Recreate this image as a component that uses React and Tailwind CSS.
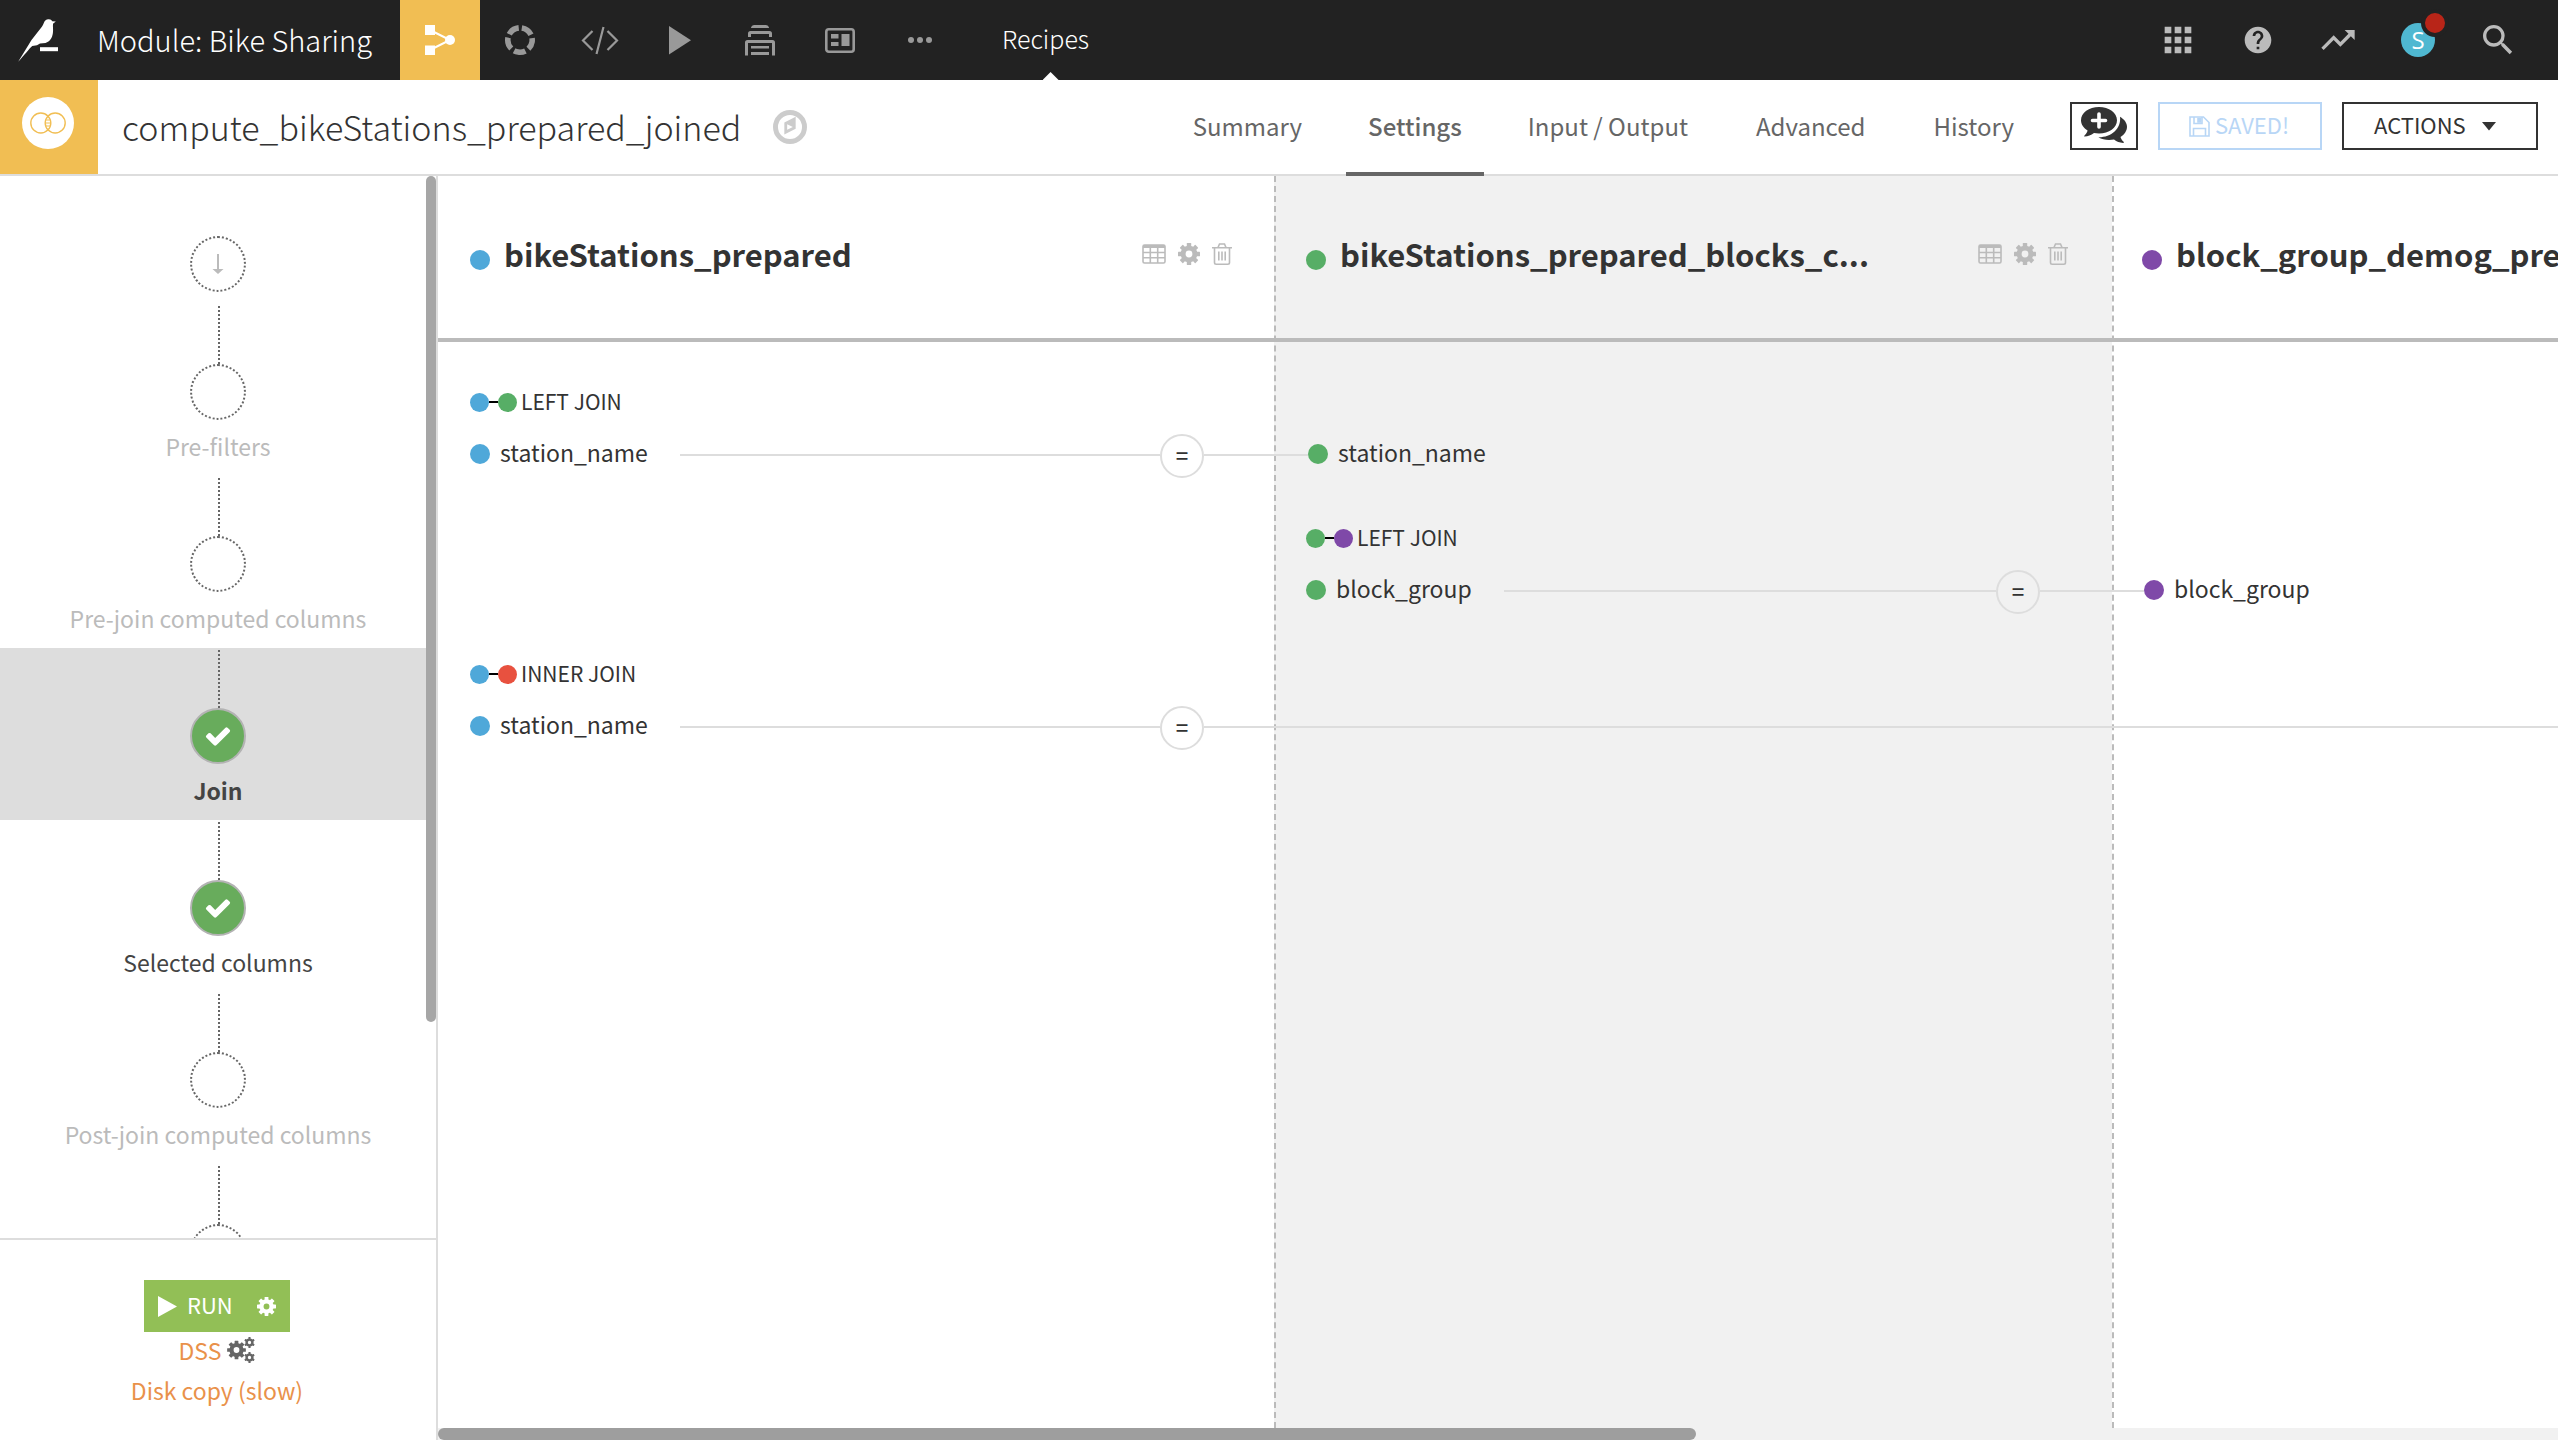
import { MdApps, MdHelp, MdSearch, MdTrendingUp } from "react-icons/md";

const steps = [
  { id: "pre-filters", label: "Pre-filters", state: "empty" },
  { id: "pre-join", label: "Pre-join computed columns", state: "empty" },
  { id: "join", label: "Join", state: "active" },
  { id: "columns", label: "Selected columns", state: "done" },
  { id: "post-join", label: "Post-join computed columns", state: "empty" },
  { id: "next", label: "", state: "empty" },
];

const tabs = ["Summary", "Settings", "Input / Output", "Advanced", "History"];

const datasets = [
  { name: "bikeStations_prepared", dot: "bg-[#4fa8d9]" },
  { name: "bikeStations_prepared_blocks_c...", dot: "bg-[#57ae66]" },
  { name: "block_group_demog_prepared", dot: "bg-[#7f49a8]" },
];

const joins = [
  {
    type: "LEFT JOIN",
    offset: "pl-8",
    left: { name: "station_name", dot: "bg-[#4fa8d9]" },
    right: { name: "station_name", dot: "bg-[#57ae66]" },
    otherDot: "bg-[#57ae66]",
  },
  {
    type: "LEFT JOIN",
    offset: "pl-[868px]",
    left: { name: "block_group", dot: "bg-[#57ae66]" },
    right: { name: "block_group", dot: "bg-[#7f49a8]" },
    otherDot: "bg-[#7f49a8]",
  },
  {
    type: "INNER JOIN",
    offset: "pl-8",
    left: { name: "station_name", dot: "bg-[#4fa8d9]" },
    right: null,
    otherDot: "bg-[#e8513f]",
  },
];

function GearShape({ teeth = 8 }) {
  const angles = Array.from({ length: teeth }, (_, i) => (i * 360) / teeth);
  return (
    <>
      <circle r="6.4" fill="none" stroke="currentColor" strokeWidth="5.4" />
      {angles.map((a) => (
        <rect key={a} x="-2.4" y="-12" width="4.8" height="4.5" rx="0.6" fill="currentColor" transform={`rotate(${a})`} />
      ))}
    </>
  );
}

function Gear({ className }) {
  return (
    <svg viewBox="-12 -12 24 24" className={className}>
      <GearShape />
    </svg>
  );
}

function Gears({ className }) {
  return (
    <svg viewBox="0 0 28 26" className={className}>
      <g transform="translate(9.5 13) scale(0.78)"><GearShape /></g>
      <g transform="translate(22.5 5.5) scale(0.45)"><GearShape teeth={6} /></g>
      <g transform="translate(22.5 20.5) scale(0.45)"><GearShape teeth={6} /></g>
    </svg>
  );
}

function Check() {
  return (
    <svg viewBox="0 0 1792 1792" className="size-7 fill-white">
      <path d="M1671 566q0 40-28 68l-724 724-136 136q-28 28-68 28t-68-28l-136-136-362-362q-28-28-28-68t28-68l136-136q28-28 68-28t68 28l294 295 656-657q28-28 68-28t68 28l136 136q28 28 28 68z" />
    </svg>
  );
}

function Logo() {
  return (
    <svg viewBox="0 0 44 44" className="size-11 fill-white">
      <path d="M2.2 44.8 L15.5 23 L25.5 10.2 C28.3 7 27.5 2.6 32.4 2.2 C34.3 2 35.6 2.9 36.2 4.2 L39.8 4.6 L37 6.8 C36.7 10 37.4 12.5 36.9 16 C36.2 21 34 24.5 29.5 26 L24 26.4 L21 28.2 L16.2 29 C13 32 8 38.5 2.2 44.8 Z" transform="translate(0 -1)" />
      <rect x="24" y="29.2" width="18" height="4" />
    </svg>
  );
}

function NavIcon({ label, children, active }) {
  return (
    <button
      aria-label={label}
      className={
        active
          ? "flex w-20 items-center justify-center bg-[#f1be53] text-white"
          : "flex w-20 items-center justify-center text-[#999]"
      }
    >
      {children}
    </button>
  );
}

function TopBar() {
  return (
    <header className="flex h-20 shrink-0 bg-[#222] text-white">
      <a href="#home" aria-label="Home" className="flex w-[97px] items-center pl-4">
        <Logo />
      </a>
      <a href="#project" className="flex w-[303px] items-center text-[29px] font-light whitespace-nowrap">
        Module: Bike Sharing
      </a>
      <nav className="flex">
        <NavIcon label="Flow" active>
          <svg viewBox="0 0 32 32" className="size-8">
            <path d="M6 6 L26 16 L6 26" fill="none" stroke="currentColor" strokeWidth="2" />
            <rect x="1" y="1" width="10" height="10" fill="currentColor" />
            <rect x="1" y="21.5" width="10" height="9.5" fill="currentColor" />
            <circle cx="26" cy="16" r="5" fill="currentColor" />
          </svg>
        </NavIcon>
        <NavIcon label="Lab">
          <svg viewBox="0 0 32 32" className="size-8">
            <circle cx="16" cy="16" r="12.2" fill="none" stroke="currentColor" strokeWidth="5.6" strokeDasharray="11.73 3.6" transform="rotate(-81.5 16 16)" />
          </svg>
        </NavIcon>
        <NavIcon label="Code">
          <svg viewBox="0 0 40 32" className="h-8 w-10" fill="none" stroke="currentColor" strokeWidth="2.2">
            <path d="M12.5 7 L3 16.5 L12.5 26 M27.5 7 L37 16.5 L27.5 26 M23.5 3 L16.5 30" />
          </svg>
        </NavIcon>
        <NavIcon label="Jobs">
          <svg viewBox="0 0 32 32" className="size-8 fill-current">
            <path d="M5 2 L27 16.2 L5 30.5 Z" />
          </svg>
        </NavIcon>
        <NavIcon label="Automation">
          <svg viewBox="0 0 32 32" className="size-8 fill-current">
            <path d="M7 4 V3.5 Q7.5 1 10 1 H22 Q24.5 1 25 3.5 V4 Z" />
            <path d="M4 13 V9.5 Q4 7 6.5 7 H25.5 Q28 7 28 9.5 V13 H25 V10 H7 V13 Z" />
            <path d="M1 31.5 V18.5 Q1 16 3.5 16 H28.5 Q31 16 31 18.5 V31.5 H28 V19 H4 V31.5 Z" />
            <rect x="7" y="22" width="18" height="2.5" />
            <rect x="7" y="28" width="18" height="3" />
          </svg>
        </NavIcon>
        <NavIcon label="Dashboards">
          <svg viewBox="0 0 32 32" className="size-8 fill-current">
            <rect x="2.3" y="5.3" width="27.4" height="22.4" rx="2.5" fill="none" stroke="currentColor" strokeWidth="2.6" />
            <rect x="7" y="10" width="7.5" height="4.5" />
            <rect x="7" y="18" width="7.5" height="4" />
            <rect x="17.5" y="10" width="8" height="12" />
          </svg>
        </NavIcon>
        <NavIcon label="More">
          <svg viewBox="0 0 32 32" className="size-8 fill-current">
            <circle cx="7" cy="16" r="3" />
            <circle cx="16" cy="16" r="3" />
            <circle cx="25" cy="16" r="3" />
          </svg>
        </NavIcon>
        <a href="#recipes" className="relative flex items-center pr-[52px] pb-0.5 pl-[42px] text-[25px] font-light">
          Recipes
          <span className="absolute bottom-0 left-1/2 h-2 w-4 -translate-x-1/2 bg-white [clip-path:polygon(50%_0,100%_100%,0_100%)]" />
        </a>
      </nav>
      <div className="ml-auto flex pr-5 text-[#bbb]">
        <button aria-label="Applications" className="flex w-20 items-center justify-center">
          <MdApps className="size-10" />
        </button>
        <button aria-label="Help" className="flex w-20 items-center justify-center">
          <MdHelp className="size-8" />
        </button>
        <button aria-label="Activity" className="flex w-20 items-center justify-center">
          <MdTrendingUp className="size-10" />
        </button>
        <button aria-label="Profile" className="flex w-20 items-center justify-center">
          <span className="relative flex size-[34px] items-center justify-center rounded-full bg-[#4fb8d1] font-['Open_Sans',sans-serif] text-[24px] leading-[34px] text-white">
            S
            <span className="absolute -top-3.5 -right-3.5 size-7 rounded-full border-4 border-[#222] bg-[#b82518]" />
          </span>
        </button>
        <button aria-label="Search" className="flex w-20 items-center justify-center">
          <MdSearch className="size-10" />
        </button>
      </div>
    </header>
  );
}

function RecipeHeader() {
  return (
    <div className="flex h-24 shrink-0 border-b-2 border-[#ddd] text-[#333]">
      <div className="flex w-[98px] items-center bg-[#f1be53] pb-2 pl-[22px]">
        <svg viewBox="0 0 52 52" className="size-[52px]">
          <circle cx="26" cy="26" r="26" fill="#fff" />
          <g fill="none" stroke="#f1be53" strokeWidth="1.4">
            <circle cx="18.8" cy="26" r="10" />
            <circle cx="33.2" cy="26" r="10" />
            <path d="M24 23 H28 M23.5 26 H28.5 M24 29 H28" strokeWidth="1" />
          </g>
        </svg>
      </div>
      <h1 className="flex items-center pl-6 text-[34px] leading-10 font-light">compute_bikeStations_prepared_joined</h1>
      <button aria-label="Navigate" className="ml-8 text-[#ccc]">
        <svg viewBox="0 0 1536 1536" className="size-[34px]">
          <circle cx="768" cy="768" r="656" fill="none" stroke="currentColor" strokeWidth="224" />
          <path d="M1024 305v542l-512 256v-542zM640 895l256-128-256-128z" fill="currentColor" fillRule="evenodd" />
        </svg>
      </button>

      <nav className="ml-auto flex h-24 gap-5">
        {tabs.map((tab) => (
          <a
            key={tab}
            href={"#" + tab}
            className={
              tab === "Settings"
                ? "flex items-center border-b-4 border-[#666] px-[22px] text-[24px] font-medium text-[#666]"
                : "flex items-center border-b-4 border-transparent px-6 text-[24px] text-[#666]"
            }
          >
            {tab}
          </a>
        ))}
      </nav>

      <div className="ml-8 flex h-[92px] items-center gap-5 pr-5 text-[22px]">
        <button aria-label="Discussions" className="flex h-12 w-[68px] justify-center border-2 border-[#333] pt-[3px]">
          <svg viewBox="0 0 46 37" className="h-[37px] w-[46px] fill-[#333]">
            <path d="M18 0 C28 0 36 5.9 36 13.3 C36 20.7 28 26.5 18 26.5 C16.2 26.5 14.5 26.3 13 26 C10 28.2 7 29.3 3.6 29.5 C3 29.5 3 28.9 3.5 28.4 C5.2 26.8 6.2 25.4 6.6 23.6 C2.6 21.2 0 17.5 0 13.3 C0 5.9 8 0 18 0 Z" />
            <path d="M39 9.8 C43.5 12.5 46 16 46 19.8 C46 23.9 43.5 27.5 39.5 30 C40 32 41 33.2 42.6 34.8 C43.1 35.3 42.9 36.1 42.2 36 C38.5 35.6 35.8 34.6 33 32.5 C27.5 33.5 21.5 32.8 17.4 30.3 C30 30.5 40.5 22 39 9.8 Z" />
            <path d="M18 7 V20 M11.5 13.5 H24.5" stroke="#fff" strokeWidth="3.6" strokeLinecap="round" />
          </svg>
        </button>
        <button className="flex h-12 w-[164px] items-center gap-[5px] border-2 border-[#b8d6f6] pl-[29px] text-[#b8d6f6]">
          <svg viewBox="0 0 21 21" className="size-[21px]" fill="none" stroke="currentColor" strokeWidth="1.6">
            <path d="M1 1 H14.5 L20 6.5 V20 H1 Z M5 1 V7.5 H13 V1 M4.5 20 V12.5 H16.5 V20" />
            <rect x="9" y="2.5" width="2.5" height="3.5" fill="currentColor" />
          </svg>
          <span className="pb-[3px]">SAVED!</span>
        </button>
        <button className="flex h-12 w-[196px] items-center gap-4 border-2 border-[#333] pl-[30px]">
          <span className="pb-[3px]">ACTIONS</span>
          <svg viewBox="0 0 14 9" className="h-[9px] w-3.5 fill-[#333]">
            <path d="M0 0 H14 L7 8.5 Z" />
          </svg>
        </button>
      </div>
    </div>
  );
}

function Step({ step }) {
  const { label, state } = step;
  const complete = state !== "empty";
  return (
    <li className={state === "active" ? "flex h-[172px] shrink-0 flex-col items-center bg-[#ddd] pt-0.5" : "flex h-[172px] shrink-0 flex-col items-center pt-0.5"}>
      <div className="h-[58px] w-1 border-r-2 border-dotted border-[#666]" />
      <div
        className={
          complete
            ? "flex size-14 items-center justify-center rounded-full border-2 border-[#b3b3b3] bg-[#68ac5c]"
            : "size-14 rounded-full border-2 border-dotted border-[#666]"
        }
      >
        {complete && <Check />}
      </div>
      {label && (
        <a
          href={"#" + step.id}
          className={
            state === "active"
              ? "mt-3 text-[23px] leading-7 font-bold text-[#444]"
              : complete
                ? "mt-3 text-[23px] leading-7 text-[#444]"
                : "mt-3 text-[23px] leading-7 text-[#bbb]"
          }
        >
          {label}
        </a>
      )}
    </li>
  );
}

function Sidebar() {
  return (
    <aside className="flex w-[438px] shrink-0 flex-col border-r-2 border-[#ddd]">
      <div className="relative min-h-0 flex-1 overflow-hidden">
        <ul className="flex flex-col">
          <li className="flex h-32 shrink-0 justify-center pt-[60px]">
            <div className="flex size-14 items-center justify-center rounded-full border-2 border-dotted border-[#666]">
              <svg viewBox="0 0 12 20" className="h-5 w-3 fill-[#bbb]">
                <path d="M5 0 H7 V15 H11.5 L6 20 L0.5 15 H5 Z" />
              </svg>
            </div>
          </li>
          {steps.map((step) => (
            <Step key={step.id} step={step} />
          ))}
        </ul>
        <div className="absolute top-0 right-0 h-[846px] w-2.5 rounded-full bg-[#a6a6a6]" />
      </div>
      <div className="flex h-[202px] shrink-0 flex-col items-center border-t-2 border-[#ddd] pt-10 pr-0.5 text-[23px] text-[#e9914a]">
        <div className="flex h-[52px] w-[146px] bg-[#92bf56] text-[22px] text-white">
          <button className="flex flex-1 items-center gap-2.5 pl-3.5">
            <svg viewBox="0 0 19 21" className="h-[21px] w-[19px] fill-white">
              <path d="M0 0 L19 10.5 L0 21 Z" />
            </svg>
            <span className="pb-[3px]">RUN</span>
          </button>
          <button aria-label="Run options" className="pr-3.5">
            <Gear className="size-[19px]" />
          </button>
        </div>
        <div className="flex h-9 items-center gap-1.5">
          <a href="#engine">DSS</a>
          <Gears className="h-[26px] w-7 text-[#666]" />
        </div>
        <a href="#engine" className="leading-[44px]">Disk copy (slow)</a>
      </div>
    </aside>
  );
}

function DatasetHeader({ dataset }) {
  return (
    <div className="flex w-[836px] shrink-0 items-center pr-[42px] pb-1.5 pl-8">
      <span className={`mt-3 size-5 rounded-full ${dataset.dot}`} />
      <h2 className="ml-3.5 text-[31px] leading-10 font-bold whitespace-nowrap">{dataset.name}</h2>
      <div className="ml-auto flex items-center gap-3 text-[#bbb]">
        <button aria-label="Explore dataset">
          <svg viewBox="0 0 24 20" className="h-5 w-6" fill="none" stroke="currentColor" strokeWidth="1.6">
            <rect x="1" y="1" width="22" height="18" rx="1.5" />
            <path d="M1 2.5 H23" strokeWidth="3" />
            <path d="M1 8.5 H23 M1 13.8 H23 M8.3 3 V19 M15.7 3 V19" />
          </svg>
        </button>
        <button aria-label="Dataset settings">
          <Gear className="size-[22px]" />
        </button>
        <button aria-label="Remove dataset">
          <svg viewBox="0 0 20 22" className="h-[22px] w-5" fill="none" stroke="currentColor" strokeWidth="1.6">
            <path d="M0 4.8 H20 M6 4.5 L7.5 1 H12.5 L14 4.5 M2.5 5 V19.5 Q2.5 21.2 4.2 21.2 H15.8 Q17.5 21.2 17.5 19.5 V5 M6.8 8.5 V17.5 M10 8.5 V17.5 M13.2 8.5 V17.5" />
          </svg>
        </button>
      </div>
    </div>
  );
}

function Join({ join }) {
  return (
    <li className={join.offset}>
      <button className="flex h-7 items-center text-[21px]">
        <span className={`size-[19px] rounded-full ${join.left.dot}`} />
        <span className="h-0.5 w-[9px] bg-black" />
        <span className={`size-[19px] rounded-full ${join.otherDot}`} />
        <span className="ml-1 pb-[3px] leading-6">{join.type}</span>
      </button>
      <div className="mt-4 flex h-11 items-center text-[23px]">
        <div className="flex w-[734px] shrink-0 items-center">
          <span className={`size-5 rounded-full ${join.left.dot}`} />
          <span className="ml-2.5 pb-1 leading-7">{join.left.name}</span>
          <span className="mt-0.5 ml-8 h-0.5 flex-1 bg-[#ddd]" />
          <button aria-label="Edit condition" className="mt-1 flex size-11 items-center justify-center rounded-full border-2 border-[#ddd] pb-1 text-[22px] font-medium">
            =
          </button>
        </div>
        {join.right ? (
          <>
            <span className="mt-0.5 h-0.5 w-[104px] bg-[#ddd]" />
            <span className={`size-5 rounded-full ${join.right.dot}`} />
            <span className="ml-2.5 pb-1 leading-7">{join.right.name}</span>
          </>
        ) : (
          <span className="mt-0.5 h-0.5 flex-1 bg-[#ddd]" />
        )}
      </div>
    </li>
  );
}

export default function App() {
  return (
    <div className="flex h-screen flex-col overflow-hidden bg-white font-['Noto_Sans_CJK_SC',sans-serif] text-[#333]">
      <TopBar />
      <RecipeHeader />
      <div className="flex min-h-0 flex-1">
        <Sidebar />
        <main className="flex min-w-0 flex-1 flex-col">
          <div className="grid min-h-0 flex-1 grid-cols-1 overflow-hidden">
            {/* column backgrounds, joins are laid over them */}
            <div className="col-start-1 row-start-1 flex min-w-0 overflow-hidden">
              <div className="w-[836px] shrink-0" />
              <div className="w-[838px] shrink-0 border-l-2 border-dashed border-[#bbb] bg-[#f1f1f1]" />
              <div className="w-[838px] shrink-0 border-l-2 border-dashed border-[#bbb]" />
            </div>
            <div className="col-start-1 row-start-1 min-w-0 overflow-hidden">
              <div className="flex h-[166px] overflow-hidden border-b-4 border-[#bbb]">
                {datasets.map((d) => (
                  <DatasetHeader key={d.name} dataset={d} />
                ))}
              </div>
              <ul className="flex flex-col gap-12 pt-[46px]">
                {joins.map((j, i) => (
                  <Join key={i} join={j} />
                ))}
              </ul>
            </div>
          </div>
          <div className="h-3 bg-[#f1f1f1]">
            <div className="h-3 w-[1258px] max-w-full rounded-full bg-[#9e9e9e]" />
          </div>
        </main>
      </div>
    </div>
  );
}
